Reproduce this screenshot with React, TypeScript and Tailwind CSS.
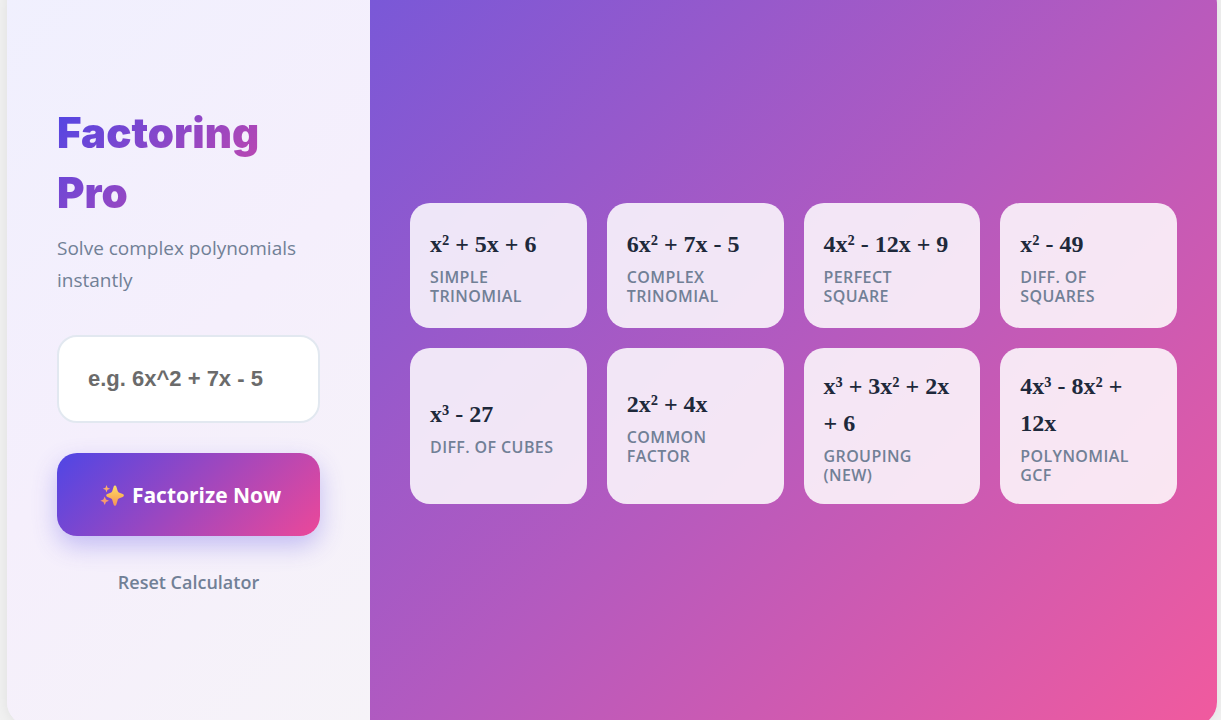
import { useState, type FormEvent } from "react";

const EXAMPLES = [
  { expr: "x² + 5x + 6", label: "Simple Trinomial" },
  { expr: "6x² + 7x - 5", label: "Complex Trinomial" },
  { expr: "4x² - 12x + 9", label: "Perfect Square" },
  { expr: "x² - 49", label: "Diff. of Squares" },
  { expr: "x³ - 27", label: "Diff. of Cubes" },
  { expr: "2x² + 4x", label: "Common Factor" },
  { expr: "x³ + 3x² + 2x + 6", label: "Grouping (New)" },
  { expr: "4x³ - 8x² + 12x", label: "Polynomial GCF" },
];

function SparklesIcon() {
  return (
    <svg width="24" height="24" viewBox="0 0 24 24" aria-hidden="true" className="shrink-0">
      <defs>
        <linearGradient id="spark" x1="0" y1="0" x2="0" y2="1">
          <stop offset="0" stopColor="#fde06a" />
          <stop offset="0.5" stopColor="#fbb958" />
          <stop offset="1" stopColor="#f2925c" />
        </linearGradient>
      </defs>
      <path
        fill="url(#spark)"
        d="M15 1.500c.7 0 1.100.4 1.300 1.100l1.400 4.500c.3.900.8 1.400 1.700 1.700l3.300 1.300c.8.300 1.200.8 1.200 1.400s-.4 1.100-1.200 1.400l-3.300 1.300c-.9.300-1.400.8-1.700 1.700l-1.400 4.800c-.2.700-.6 1.100-1.300 1.100s-1.100-.4-1.300-1.100l-1.400-4.800c-.3-.9-.8-1.400-1.700-1.700l-3.200-1.300c-.8-.3-1.200-.8-1.200-1.400s.4-1.100 1.200-1.400l3.200-1.300c.9-.3 1.400-.8 1.700-1.700l1.400-4.500c.2-.7.6-1.100 1.300-1.100z"
      />
      <path fill="#fcae6b" d="M6.500 1l1 2.700 2.700 1-2.700 1-1 2.700-1-2.700-2.700-1 2.700-1z" />
      <path fill="#f79b6e" d="M4.700 12.500l1.300 3 3 1.300-3 1.300-1.300 3-1.300-3-3-1.300 3-1.300z" />
    </svg>
  );
}

export default function App() {
  const [value, setValue] = useState("");

  const submit = (e: FormEvent) => e.preventDefault();

  return (
    <div className="h-screen overflow-hidden bg-[#f1f1f1] pl-[7px] pr-1 font-['Open_Sans','Noto_Sans',sans-serif]">
      <main className="-mt-5 grid h-[calc(100vh+26px)] grid-cols-[3fr_7fr] overflow-hidden rounded-3xl bg-[#f4f0fb] shadow-[0_0_14px_rgba(0,0,0,0.08)]">
        <form
          onSubmit={submit}
          className="flex min-w-0 flex-col justify-center bg-linear-135/srgb from-[#f0f0fe] via-[#f5effc] to-[#f6f3f8] px-[50px] pt-px"
        >
          <h1 className="bg-linear-135/srgb from-[#4f46e5] to-[#ec4899] bg-clip-text font-['Inter',sans-serif] text-[42px] leading-[60px] font-black text-transparent">
            Factoring Pro
          </h1>
          <p className="mt-[9px] text-[19px] leading-8 text-[#718096]">
            Solve complex polynomials instantly
          </p>
          <input
            type="text"
            aria-label="Polynomial"
            value={value}
            onChange={(e) => setValue(e.target.value)}
            placeholder="e.g. 6x^2 + 7x - 5"
            className="mt-[39px] h-[88px] w-full rounded-[20px] border-2 border-[#e2e8f0] bg-white px-[29px] font-['Liberation_Sans',sans-serif] text-[22px] font-bold text-[#1e293b] outline-none placeholder:text-[#6b6b6b]"
          />
          <button
            type="submit"
            className="mt-[30px] flex h-[83px] items-center justify-center gap-2 rounded-[20px] bg-linear-135/srgb from-[#4f46e5] to-[#ec4899] pt-0.5 pl-1 text-[21px] font-bold whitespace-nowrap text-white shadow-[0_10px_25px_rgba(79,70,229,0.3)]"
          >
            <SparklesIcon />
            Factorize Now
          </button>
          <button
            type="button"
            onClick={() => setValue("")}
            className="mt-6 h-11 text-[18px] font-semibold text-[#718096]"
          >
            Reset Calculator
          </button>
        </form>

        <section className="flex min-w-0 flex-col justify-center bg-linear-135/srgb from-[#7858d8] via-[#b45abf] to-[#f15a9e] px-10">
          <div className="grid grid-cols-4 gap-5">
            {EXAMPLES.map((ex) => (
              <button
                key={ex.expr}
                type="button"
                onClick={() => setValue(ex.expr)}
                className="flex min-h-[125px] flex-col justify-center gap-[5px] rounded-[20px] bg-white/85 pt-5 pr-6 pb-[19px] pl-5 text-left"
              >
                <span className="font-['Liberation_Serif',serif] text-[24px] leading-[37px] font-bold text-[#1e293b]">
                  {ex.expr}
                </span>
                <span className="text-[16px] leading-[19px] font-semibold tracking-wide text-[#718096] uppercase">
                  {ex.label}
                </span>
              </button>
            ))}
          </div>
        </section>
      </main>
    </div>
  );
}
